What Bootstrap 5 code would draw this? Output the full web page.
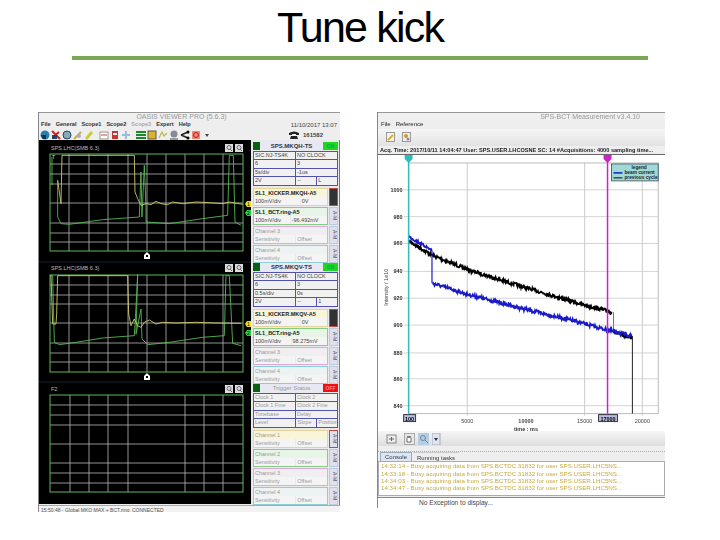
<!DOCTYPE html>
<html lang="en">
<head>
<meta charset="UTF-8">
<title>Tune kick</title>
<link href="https://cdn.jsdelivr.net/npm/bootstrap@5.3.0/dist/css/bootstrap.min.css" rel="stylesheet">
<style>
body { background: #fff; width: 720px; height: 540px; overflow: hidden; font-family: "Liberation Sans", Arial, sans-serif; }
.slide-title { height: 56px; line-height: 54px; font-size: 43px; letter-spacing: -1.8px; font-weight: 400; color: #000; font-family: "Liberation Sans", Arial, sans-serif; }
.slide-rule { height: 4px; margin: 0 72px; background: #7ba857; }
.shots { margin-top: 52px; padding-left: 38px; gap: 37px; filter: blur(.5px); }
.win { background: #eeeeee; font-size: 6px; line-height: 1; color: #222; overflow: hidden; border-left: 1px solid #888; }
.win-left { width: 302px; height: 400px; }
.win-right { width: 288px; height: 396px; }
.win-title { height: 8px; color: #999; background: #f0f0f0; border-top: 1px solid #999; font-size: 7px; }
.title-left { padding-right: 16px; text-align: center; }
.title-right { padding-right: 25px; text-align: right; }
.menu-row { height: 10px; font-size: 5.6px; font-weight: 700; gap: 5px; padding-left: 2px; color: #333; }
.dim-item { color: #aaa; }
.date-txt { font-weight: 400; font-size: 6px; padding-right: 3px; color: #444; }
.tool-row { height: 11px; gap: 1px; padding-left: 1px; }
.tool-row svg { width: 10px; height: 10px; flex: none; }
.phone-txt { font-size: 6px; font-weight: 700; color: #444; padding-right: 17px; }
.scope-svg { width: 212px; height: 364px; display: block; flex: none; background: #000; }
.scope-svg text { font-family: "Liberation Sans", Arial, sans-serif; }
.side-panel { width: 89px; padding: 2px 1px 0 2px; background: #e9e9ec; border-right: 1px solid #777; }
.grp { height: 121px; }
.grp-hdr { height: 8px; margin-bottom: 1px; }
.led-box { width: 7px; background: #0b5f12; }
.name-box { background: #e8e8f4; text-align: center; font-size: 6px; font-weight: 700; color: #333; line-height: 8px; }
.state-box { width: 15px; text-align: center; line-height: 8px; font-size: 5px; font-weight: 700; }
.state-on { background: #1fd61f; color: #0a5; }
.state-off { background: #f01010; color: #f88; }
.set-box { border: 1px solid #5252b0; background: #5252b0; gap: 1px; margin-bottom: 2px; }
.set-row { height: 7.4px; gap: 1px; }
.set-cell { background: #f1f1f1; padding-left: 1px; font-size: 5.5px; line-height: 7.4px; color: #444; white-space: nowrap; overflow: hidden; }
.chan-line { gap: 1px; margin-bottom: 1px; height: 18px; }
.chan-box { width: 76px; border: 1px solid; padding: 0; }
.chan-name { height: 8px; line-height: 8px; font-size: 5.5px; font-weight: 700; padding-left: 1px; white-space: nowrap; overflow: hidden; color: #222; }
.chan-vals { height: 8px; gap: 1px; }
.chan-vals span { background: #f4f4f4; font-size: 5.5px; line-height: 8px; padding-left: 1px; color: #444; overflow: hidden; white-space: nowrap; }
.chan-tab { width: 9px; border: 1px solid; background: #dfe0ee; font-size: 5px; writing-mode: vertical-rl; text-align: center; color: #445; overflow: hidden; }
.tab-active { background: #333 content-box; }
.c1 { border-color: #e4d497; }
.c1 .chan-name { background: #faf4d8; }
.c2 { border-color: #86cc86; }
.c2 .chan-name { background: #e6f5e6; }
.c3 { border-color: #deaade; }
.c3 .chan-name { background: #f1eef1; }
.c4 { border-color: #8ccdd6; }
.c4 .chan-name { background: #edf3f3; }
.chan-line .chan-unset .chan-name, .chan-line .chan-unset .chan-vals span { color: #999; font-weight: 400; }
.off-txt .set-cell, .off-txt .name-box { color: #999; font-weight: 400; }
.status-row { height: 7px; background: #f2f2f2; font-size: 5px; padding-left: 2px; line-height: 8px; color: #555; border-top: 1px solid #aaa; white-space: nowrap; }
.menu-b { height: 9px; gap: 5px; padding-left: 3px; font-size: 6px; font-weight: 400; color: #222; }
.tool-b { height: 17px; gap: 7px; padding-left: 8px; background: linear-gradient(#f6f6f6, #e2e2e2); }
.tool-b svg { width: 9px; height: 10px; }
.acq-line { height: 9px; line-height: 9px; font-size: 5.6px; font-weight: 700; color: #222; padding-left: 2px; white-space: nowrap; overflow: hidden; border-bottom: 1px solid #666; }
.chart-svg { width: 287px; height: 278px; display: block; background: #fff; }
.chart-svg text { font-family: "Liberation Sans", Arial, sans-serif; }
.tool-c { height: 15px; gap: 3px; padding-left: 8px; background: linear-gradient(#f6f6f6, #dedede); }
.tool-c svg { width: 11px; height: 12px; }
.split-dots { height: 6px; border-bottom: 1px dotted #aaa; }
.tab-row { height: 9px; gap: 1px; padding-left: 2px; font-size: 6px; }
.tab-on { background: #dbe6f2; border: 1px solid #9ab; border-bottom: 0; padding: 1px 4px 0; color: #334; }
.tab-plain { padding: 2px 4px 0; border-top: 1px solid #ccc; color: #334; }
.log-box { height: 35px; background: #fff; border: 1px solid #aab; color: #c9aa40; font-size: 6.2px; line-height: 7.3px; padding-left: 2px; white-space: nowrap; overflow: hidden; }
.exc-line { height: 11px; background: #fff; padding: 2px 0 0 41px; font-size: 6.6px; color: #444; border-top: 1px solid #888; margin-top: 1px; }
</style>
</head>
<body>
<div class="slide">
  <h1 class="slide-title text-center m-0">Tune kick</h1>
  <div class="slide-rule"></div>
  <div class="shots d-flex align-items-start">

    <!-- ventana OASIS -->
    <div class="win win-left d-flex flex-column">
      <div class="win-title title-left">OASIS VIEWER PRO (5.6.3)</div>
      <div class="menu-row d-flex align-items-center">
        <span>File</span><span>General</span><span>Scope1</span><span>Scope2</span><span class="dim-item">Scope3</span><span>Expert</span><span>Help</span>
        <span class="date-txt ms-auto">11/10/2017 13:07</span>
      </div>
      <div class="tool-row d-flex align-items-center">
        <svg viewBox="0 0 10 10"><circle cx="5" cy="5" r="4.5" fill="#2a7fb0"/><path d="M1 5h5v4H3z" fill="#134"/></svg>
        <svg viewBox="0 0 10 10"><path d="M1 1l8 8M2 7l6-5" stroke="#c22" stroke-width="2"/><path d="M1 5h5v4H1z" fill="#246"/></svg>
        <svg viewBox="0 0 10 10"><circle cx="5" cy="5" r="4" fill="#8ab" stroke="#246"/></svg>
        <svg viewBox="0 0 10 10"><path d="M1 9l7-7" stroke="#da3" stroke-width="2"/><circle cx="6" cy="6" r="2" fill="#aac"/></svg>
        <svg viewBox="0 0 10 10"><path d="M2 9l6-7" stroke="#cc3" stroke-width="3"/></svg>
        <svg viewBox="0 0 10 10" class="ms-1"><rect x="1" y="2" width="8" height="7" fill="#fff" stroke="#999"/><path d="M2 5h6" stroke="#c44"/></svg>
        <svg viewBox="0 0 10 10"><rect x="2" y="1" width="6" height="8" fill="#c33"/><rect x="3" y="3" width="4" height="2" fill="#fff"/></svg>
        <svg viewBox="0 0 10 10"><path d="M1 5h8M5 1v8" stroke="#9bd" stroke-width="2"/></svg>
        <svg viewBox="0 0 10 10" class="ms-1"><path d="M0 2h10M0 5h10M0 8h10" stroke="#1a8a2a" stroke-width="2"/></svg>
        <svg viewBox="0 0 10 10"><rect x="1" y="1" width="8" height="8" fill="#d9b52a" stroke="#654"/></svg>
        <svg viewBox="0 0 10 10"><path d="M1 8l3-6 2 4 3-3" fill="none" stroke="#bb4" stroke-width="1.2"/></svg>
        <svg viewBox="0 0 10 10"><circle cx="5" cy="4" r="3.5" fill="#889"/><path d="M1 9h8" stroke="#354"/></svg>
        <svg viewBox="0 0 10 10"><path d="M1 5l7-3M1 5l7 3" stroke="#222" stroke-width="1.5"/><circle cx="8" cy="2" r="1.5"/><circle cx="8" cy="8" r="1.5"/></svg>
        <svg viewBox="0 0 10 10"><rect x="1" y="1" width="8" height="8" fill="#e87"/><circle cx="5" cy="5" r="2.5" fill="none" stroke="#c11"/></svg>
        <svg viewBox="0 0 10 10"><path d="M3 4h4L5 7z" fill="#444"/></svg>
        <span class="phone-txt ms-auto d-flex align-items-center gap-1">
          <svg viewBox="0 0 10 10"><path d="M0 3q5-3 10 0v2H7V4H3v1H0zM2 6h6l1 3H1z" fill="#222"/></svg>161582
        </span>
      </div>
      <div class="d-flex">
        <svg class="scope-svg" viewBox="38 141 212 364" id="scopes"></svg>
        <div class="side-panel" id="panel"></div>
      </div>
      <div class="status-row">15:50:48 - Global MKQ MAX + BCT.ring. CONNECTED</div>
    </div>

    <!-- ventana BCT -->
    <div class="win win-right d-flex flex-column">
      <div class="win-title title-right">SPS-BCT Measurement v3.4.10</div>
      <div class="menu-b d-flex align-items-center"><span>File</span><span>Reference</span></div>
      <div class="tool-b d-flex align-items-center">
        <svg viewBox="0 0 9 10"><rect x=".5" y=".5" width="8" height="9" fill="#f4f4e8" stroke="#999"/><path d="M2 8l5-5" stroke="#da3" stroke-width="2"/></svg>
        <svg viewBox="0 0 9 10"><rect x=".5" y=".5" width="8" height="9" fill="#f0f0f0" stroke="#999"/><circle cx="4" cy="4" r="2" fill="#c93"/><circle cx="6" cy="7" r="1.5" fill="#88a"/></svg>
      </div>
      <div class="acq-line">Acq. Time: 2017/10/11 14:04:47 User: SPS.USER.LHCOSNE SC: 14 #Acquisitions: 4000 sampling time...</div>
      <svg class="chart-svg" viewBox="378 155 287 278" id="chart"></svg>
      <div class="tool-c d-flex align-items-center">
        <svg viewBox="0 0 11 12"><rect x="1" y="2" width="9" height="8" fill="#eee" stroke="#888"/><path d="M3 6h5M5.500 4v4" stroke="#666"/></svg>
        <svg viewBox="0 0 11 12" class="ms-1"><rect x=".5" y=".5" width="10" height="11" fill="#e8e8e8" stroke="#aaa"/><path d="M3 9V5l1-2 1 2 1-2 1 2v4z" fill="#fff" stroke="#333" stroke-width=".7"/></svg>
        <svg viewBox="0 0 11 12"><rect width="11" height="12" fill="#b5cce2"/><circle cx="5" cy="5" r="2.500" fill="none" stroke="#789"/><path d="M7 7l3 3" stroke="#789"/></svg>
        <svg viewBox="0 0 11 12"><rect width="8" height="12" fill="#dde6f0" stroke="#aab"/><path d="M2 5h4L4 8z" fill="#333"/></svg>
      </div>
      <div class="split-dots"></div>
      <div class="tab-row d-flex"><span class="tab-on">Console</span><span class="tab-plain">Running tasks</span></div>
      <div class="log-box">
        14:32:14 - Busy acquiring data from SPS.BCTDC.31832 for user SPS.USER.LHC5NS...<br>
        14:33:18 - Busy acquiring data from SPS.BCTDC.31832 for user SPS.USER.LHC5NS...<br>
        14:34:03 - Busy acquiring data from SPS.BCTDC.31832 for user SPS.USER.LHC5NS...<br>
        14:34:47 - Busy acquiring data from SPS.BCTDC.31832 for user SPS.USER.LHC5NS...
      </div>
      <div class="exc-line">No Exception to display...</div>
    </div>
  </div>
</div>

<script src="https://cdn.jsdelivr.net/npm/bootstrap@5.3.0/dist/js/bootstrap.bundle.min.js"></script>
<script>
// paneles de la derecha
const grupos = [
  { nombre: 'SPS.MKQH-TS', estado: 'ON', filas: [['SIC.NJ-TS4K', 'NO CLOCK'], ['6', '3'], ['5s/div', '-1us'], ['2V', '--', 'L']],
    canales: [['SL1_KICKER.MKQH-A5', '100mV/div', '0V'], ['SL1_BCT.ring-A5', '100mV/div', '-96.492mV'], ['Channel 3', 'Sensitivity', 'Offset'], ['Channel 4', 'Sensitivity', 'Offset']] },
  { nombre: 'SPS.MKQV-TS', estado: 'ON', filas: [['SIC.NJ-TS4K', 'NO CLOCK'], ['6', '3'], ['0.5s/div', '0s'], ['2V', '--', '1']],
    canales: [['SL1_KICKER.MKQV-A5', '100mV/div', '0V'], ['SL1_BCT.ring-A5', '100mV/div', '98.275mV'], ['Channel 3', 'Sensitivity', 'Offset'], ['Channel 4', 'Sensitivity', 'Offset']] },
  { nombre: 'Trigger Status', estado: 'OFF', filas: [['Clock 1', 'Clock 2'], ['Clock 1 Fine', 'Clock 2 Fine'], ['Timebase', 'Delay'], ['Level', 'Slope', 'Position']],
    canales: [['Channel 1', 'Sensitivity', 'Offset'], ['Channel 2', 'Sensitivity', 'Offset'], ['Channel 3', 'Sensitivity', 'Offset'], ['Channel 4', 'Sensitivity', 'Offset']] }
];
let html = '';
grupos.forEach(g => {
  const off = g.estado === 'OFF';
  html += `<div class="grp ${off ? 'off-txt' : ''}">
    <div class="grp-hdr d-flex"><div class="led-box"></div><div class="name-box flex-fill">${g.nombre}</div><div class="state-box ${off ? 'state-off' : 'state-on'}">${g.estado}</div></div>
    <div class="set-box d-flex flex-column">`;
  g.filas.forEach(f => {
    html += '<div class="set-row d-flex">' + f.map((c, i) => `<span class="set-cell ${f.length === 3 && i > 0 ? 'flex-fill' : ''}" style="width:${f.length === 3 ? (i === 0 ? 42 : 20) : 42}px">${c}</span>`).join('') + '</div>';
  });
  html += '</div>';
  g.canales.forEach((c, i) => {
    const tabColor = i === 0 ? '#c44' : '#bcd';
    const active = i === 0 && !off;
    const unset = c[0].startsWith('Channel') ? 'chan-unset' : '';
    html += `<div class="chan-line d-flex"><div class="chan-box c${i + 1} ${unset}"><div class="chan-name">${c[0]}</div><div class="chan-vals d-flex"><span class="flex-fill">${c[1]}</span><span class="flex-fill">${c[2]}</span></div></div>
      <div class="chan-tab ${active ? 'tab-active' : ''}" style="border-color:${tabColor}">${active ? '' : 'A-M'}</div></div>`;
  });
  html += '</div>';
});
document.getElementById('panel').innerHTML = html;

// osciloscopios
function pts(a) { return a.map(p => p.join(',')).join(' '); }
function traza(a, color, dx, dy) {
  return `<g transform="translate(${dx},${dy}) scale(.3333)"><polyline points="${pts(a)}" fill="none" stroke="${color}" stroke-width="2.6"/></g>`;
}
function scope(y0, horiz, vert) {
  let s = '';
  horiz.forEach(y => { s += `<line x1="49" x2="242" y1="${y}" y2="${y}" stroke="#b8b8b8" stroke-width=".8"/>`; });
  vert.forEach(x => { s += `<line x1="${x}" x2="${x}" y1="${y0}" y2="${y0 + 97}" stroke="#b8b8b8" stroke-width=".8"/>`; });
  s += `<rect x="49" y="${y0}" width="193" height="97" fill="none" stroke="#5cb85c"/>`;
  return s;
}
function lupa(x, y) {
  return `<rect x="${x - 4}" y="${y - 4}" width="8" height="8" fill="#ddd"/><circle cx="${x}" cy="${y - .5}" r="2" fill="none" stroke="#667"/><path d="M${x + 1} ${y + 1}l2 2" stroke="#667"/>`;
}
function disparo(x, y) {
  return `<path d="M${x - 3} ${y + 3}V${y - 1}L${x} ${y - 4}L${x + 3} ${y - 1}V${y + 3}Z" fill="#fff"/><rect x="${x - 1}" y="${y - 1}" width="2" height="2" fill="#000"/>`;
}
function marca(y, color, t) {
  return `<path d="M250 ${y - 3}H246L244 ${y}L246 ${y + 3}H250Z" fill="${color}"/><text x="246" y="${y + 2}" font-size="5" fill="#000">${t}</text>`;
}
const vertTodas = [68, 88, 107, 127, 146, 165, 184, 203, 222];
const vertPoco = [69, 88, 107, 127, 184, 203, 222];
let svg = '';
svg += scope(155, [165, 175, 185, 204, 224, 234, 243], vertTodas);
svg += scope(276, [286, 296, 305, 324, 344, 354, 363], vertTodas);
svg += scope(396, [406, 416, 426, 445, 464, 474, 484], vertPoco);
svg += '<line x1="38" x2="250" y1="263" y2="263" stroke="#123" /><line x1="38" x2="250" y1="383" y2="383" stroke="#123"/>';
svg += '<text x="50" y="151" font-size="5.500" fill="#bbb">SPS.LHC(SMB 6.3)</text><text x="50" y="271" font-size="5.500" fill="#bbb">SPS.LHC(SMB 6.3)</text><text x="50" y="392" font-size="5.500" fill="#bbb">F2</text>';
svg += '<text x="51" y="160" font-size="5" fill="#ddd">T</text>';
svg += lupa(228, 149) + lupa(238, 149) + lupa(228, 269) + lupa(238, 269) + lupa(228, 390) + lupa(238, 390);
svg += disparo(146, 257) + disparo(146, 378);
svg += marca(205, '#f0e020', '1') + marca(214, '#30d040', '2') + marca(325, '#f0e020', '1') + marca(334, '#30d040', '2');
svg += traza([[48, 150], [48, 235]], '#55c055', 35, 108);
svg += traza([[65, 220], [65, 330], [75, 350], [100, 352], [200, 338], [310, 330], [315, 195], [318, 330], [325, 175], [330, 300], [330, 345], [400, 350], [500, 335], [575, 325], [580, 145], [592, 145], [597, 345], [615, 355]], '#55c055', 35, 108);
svg += traza([[65, 220], [75, 290], [78, 145], [295, 145], [297, 255], [305, 275], [315, 295], [330, 290], [345, 293], [360, 283], [375, 290], [395, 293], [410, 285], [440, 290], [480, 285], [520, 287], [560, 290], [580, 285], [620, 292]], '#d8d070', 35, 108);
svg += traza([[42, 65], [50, 65], [55, 265], [70, 272], [120, 265], [200, 252], [295, 245], [300, 160], [305, 62], [300, 240], [315, 165], [318, 255], [335, 272], [400, 265], [500, 250], [565, 245], [570, 65], [580, 65], [590, 268], [615, 275]], '#55c055', 35, 255);
svg += traza([[45, 65], [50, 210], [60, 210], [62, 180], [65, 65], [275, 65], [278, 180], [285, 215], [295, 195], [305, 215], [315, 220], [325, 205], [340, 198], [360, 210], [380, 205], [420, 207], [480, 205], [540, 207], [615, 208]], '#d8d070', 35, 255);
document.getElementById('scopes').innerHTML = svg;

// grafica de intensidad
let semilla = 7;
function azar() { semilla = (semilla * 16807) % 2147483647; return semilla / 2147483647 - .5; }
function ruido(a, amp) {
  const out = [];
  for (let i = 0; i < a.length - 1; i++) {
    const [x1, y1] = a[i], [x2, y2] = a[i + 1];
    if (x1 === x2) { out.push([x1, y1], [x2, y2]); continue; }
    for (let x = x1; x < x2; x += .5) {
      const y = y1 + (y2 - y1) * (x - x1) / (x2 - x1);
      out.push([x, (y + azar() * amp).toFixed(1)]);
    }
  }
  return pts(out);
}
let g = '';
[190, 217, 244, 272, 299, 326, 354, 380, 407].forEach((y, i) => {
  g += `<line x1="403" x2="659" y1="${y}" y2="${y}" stroke="#d4d4d4"/><text x="402" y="${y + 2}" font-size="5.500" font-weight="700" text-anchor="end" fill="#333">${1000 - i * 20}</text>`;
});
[467, 585, 643].forEach(x => { g += `<line x1="${x}" x2="${x}" y1="163" y2="417" stroke="#ccc"/>`; });
g += '<rect x="408" y="163" width="251" height="252" fill="none" stroke="#bbb"/>';
g += `<polyline points="${ruido([[409, 242], [432, 256], [467, 270], [508, 283], [548, 295], [582, 305], [613, 313]], 3.5)}" fill="none" stroke="#000" stroke-width="1.8"/>`;
g += '<polyline points="614,313 614,333" stroke="#777" fill="none"/>';
g += `<polyline points="${ruido([[614, 333], [633, 339]], 3.5)}" fill="none" stroke="#000" stroke-width="1.8"/>`;
g += '<line x1="633" x2="633" y1="337" y2="415" stroke="#222"/>';
g += `<polyline points="${ruido([[408, 237], [432, 251]], 2.5)}" fill="none" stroke="#1a1ac8" stroke-width="1.8"/>`;
g += '<line x1="431.500" x2="431.500" y1="251" y2="284" stroke="#1a1ac8" stroke-width="1.2"/>';
g += `<polyline points="${ruido([[432, 284], [467, 295], [525, 310], [575, 322], [608, 331], [633, 337]], 3.5)}" fill="none" stroke="#1a1ac8" stroke-width="1.8"/>`;
g += '<line x1="408" x2="408" y1="160" y2="415" stroke="#2fbcbc" stroke-width="1.500"/><path d="M404 155h8v4l-4 4-4-4z" fill="#2fbcbc"/>';
g += '<line x1="608" x2="608" y1="160" y2="415" stroke="#d020c8" stroke-width="1.500"/><path d="M604 155h8v4l-4 4-4-4z" fill="#d020c8"/>';
g += '<rect x="403" y="416" width="12" height="7" fill="#b9bde0" stroke="#334"/><text x="409" y="422" font-size="5.500" font-weight="700" text-anchor="middle">100</text>';
g += '<rect x="599" y="416" width="19" height="7" fill="#b9bde0" stroke="#334"/><text x="608.500" y="422" font-size="5.500" font-weight="700" text-anchor="middle">17000</text>';
[[467, '5000', 400], [526, '10000', 700], [585, '15000', 400], [643, '20000', 400]].forEach(t => {
  g += `<text x="${t[0]}" y="424" font-size="5.500" font-weight="${t[2]}" text-anchor="middle" fill="#444">${t[1]}</text>`;
});
g += '<text x="526" y="432" font-size="5.500" font-weight="700" text-anchor="middle" fill="#333">time : ms</text>';
g += '<text transform="translate(387,288) rotate(-90)" font-size="5.500" text-anchor="middle" fill="#444">Intensity / 1e10</text>';
g += '<rect x="612" y="164" width="47" height="17" fill="#9fdad6" stroke="#567"/>';
g += '<text x="632" y="169" font-size="4.800" font-weight="700" fill="#223">legend</text><text x="625" y="174" font-size="4.800" font-weight="700" fill="#223">beam current</text><text x="625" y="179.500" font-size="4.800" font-weight="700" fill="#223">previous cycle</text>';
g += '<line x1="614" x2="623" y1="173" y2="173" stroke="#1a1ac8" stroke-width="1.500"/><line x1="614" x2="623" y1="178" y2="178" stroke="#000"/>';
document.getElementById('chart').innerHTML = g;
</script>
</body>
</html>
